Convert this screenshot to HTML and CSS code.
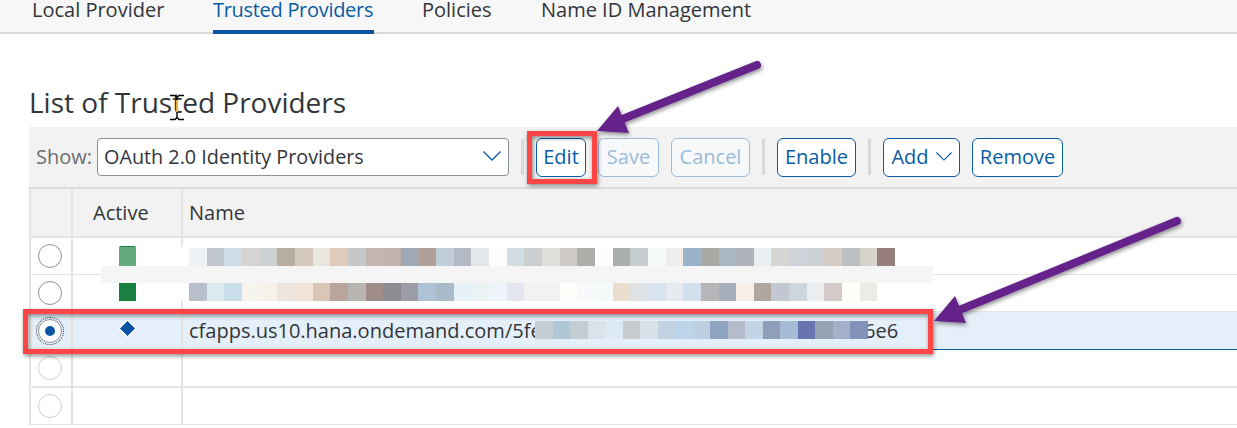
FILE: index.html
```html
<!DOCTYPE html>
<html lang="en">
<head>
<meta charset="utf-8">
<title>List of Trusted Providers</title>
<link rel="stylesheet" href="styles.css">
</head>
<body>
<nav class="tabs">
  <a class="tab tab-local">Local Provider</a>
  <a class="tab tab-active">Trusted Providers</a>
  <a class="tab tab-policies">Policies</a>
  <a class="tab tab-nameid">Name ID Management</a>
</nav>
<main class="content">
  <h1 class="title">List of Trusted Providers</h1>
  <div class="toolbar">
    <span class="show-label">Show:</span>
    <div class="select">
      <span>OAuth 2.0 Identity Providers</span>
      <svg class="chevron chevron-lg" viewBox="0 0 18 10"><path d="M0.5 0.5 L9 9 L17.5 0.5"/></svg>
    </div>
    <span class="sep"></span>
    <button class="btn btn-edit">Edit</button>
    <button class="btn btn-save" disabled>Save</button>
    <button class="btn btn-cancel" disabled>Cancel</button>
    <span class="sep"></span>
    <button class="btn btn-enable">Enable</button>
    <span class="sep"></span>
    <button class="btn btn-add">Add<svg class="chevron" viewBox="0 0 18 10"><path d="M0.5 0.5 L9 9 L17.5 0.5"/></svg></button>
    <button class="btn btn-remove">Remove</button>
  </div>
  <div class="table">
    <div class="row row-head">
      <div class="cell"></div>
      <div class="cell cell-active">Active</div>
      <div class="cell cell-name">Name</div>
    </div>
    <div class="row row-thin">
      <div class="cell cell-radio"><span class="radio"></span></div>
      <div class="cell cell-status"><span class="status status-faded"></span></div>
      <div class="cell cell-name"></div>
    </div>
    <div class="row row-thin">
      <div class="cell cell-radio"><span class="radio"></span></div>
      <div class="cell cell-status"><span class="status status-solid"></span></div>
      <div class="cell cell-name"></div>
    </div>
    <div class="row row-selected">
      <div class="cell cell-radio"><span class="radio radio-on"></span></div>
      <div class="cell cell-diamond"><span class="diamond"></span></div>
      <div class="cell cell-name"><span class="name-start">cfapps.us10.hana.ondemand.com/5fe</span><span class="name-end">6e6</span></div>
    </div>
    <div class="row row-empty">
      <div class="cell cell-radio"><span class="radio radio-off"></span></div>
      <div class="cell"></div>
      <div class="cell"></div>
    </div>
    <div class="row row-empty row-thin">
      <div class="cell cell-radio"><span class="radio radio-off"></span></div>
      <div class="cell"></div>
      <div class="cell"></div>
    </div>
  </div>
</main>
<svg class="annotations" viewBox="0 0 1237 428" width="1237" height="428" aria-hidden="true">
  <defs>
    <filter id="shadow" x="-10%" y="-30%" width="120%" height="170%">
      <feDropShadow dx="1" dy="2" stdDeviation="2" flood-color="#000" flood-opacity="0.45"/>
    </filter>
  </defs>
  <rect x="181" y="247" width="8" height="19" fill="#fff"/>
  <rect x="181" y="283" width="8" height="18" fill="#fff"/>
  <rect x="101" y="266" width="832" height="17" fill="#f5f5f5"/>
  <svg x="189" y="248" width="706" height="18" viewBox="0 0 40 1" preserveAspectRatio="none" shape-rendering="crispEdges">
    <rect x="0" width="1.02" height="1" fill="#eff2f4"/><rect x="1" width="1.02" height="1" fill="#bfc6ce"/><rect x="2" width="1.02" height="1" fill="#cddce5"/><rect x="3" width="1.02" height="1" fill="#d5d4d2"/><rect x="4" width="1.02" height="1" fill="#cdd1d2"/><rect x="5" width="1.02" height="1" fill="#b8ae9f"/><rect x="6" width="1.02" height="1" fill="#d4c7bb"/><rect x="7" width="1.02" height="1" fill="#e8e6de"/><rect x="8" width="1.02" height="1" fill="#dfcbbb"/><rect x="9" width="1.02" height="1" fill="#c6c7c9"/>
    <rect x="10" width="1.02" height="1" fill="#c4b7b1"/><rect x="11" width="1.02" height="1" fill="#c1b3ae"/><rect x="12" width="1.02" height="1" fill="#9fa8b5"/><rect x="13" width="1.02" height="1" fill="#b0a09b"/><rect x="14" width="1.02" height="1" fill="#c2cfd7"/><rect x="15" width="1.02" height="1" fill="#b3bac5"/><rect x="16" width="1.02" height="1" fill="#e3e7ea"/><rect x="17" width="1.02" height="1" fill="#fbfcfb"/><rect x="18" width="1.02" height="1" fill="#d2dde1"/><rect x="19" width="1.02" height="1" fill="#cccfcf"/>
    <rect x="20" width="1.02" height="1" fill="#e0dfdb"/><rect x="21" width="1.02" height="1" fill="#cdc9c4"/><rect x="22" width="1.02" height="1" fill="#b0aeaa"/><rect x="23" width="1.02" height="1" fill="#fcfcfa"/><rect x="24" width="1.02" height="1" fill="#abafae"/><rect x="25" width="1.02" height="1" fill="#c6ced1"/><rect x="26" width="1.02" height="1" fill="#f5f9fa"/><rect x="27" width="1.02" height="1" fill="#eeedeb"/><rect x="28" width="1.02" height="1" fill="#9ab3c8"/><rect x="29" width="1.02" height="1" fill="#a9a8a5"/>
    <rect x="30" width="1.02" height="1" fill="#abb7c3"/><rect x="31" width="1.02" height="1" fill="#b0b3bc"/><rect x="32" width="1.02" height="1" fill="#e9eef0"/><rect x="33" width="1.02" height="1" fill="#d5d5d3"/><rect x="34" width="1.02" height="1" fill="#ced3da"/><rect x="35" width="1.02" height="1" fill="#ccd1d6"/><rect x="36" width="1.02" height="1" fill="#d5ccc3"/><rect x="37" width="1.02" height="1" fill="#bdc0c1"/><rect x="38" width="1.02" height="1" fill="#d6d2cc"/><rect x="39" width="1" height="1" fill="#987f7e"/>
  </svg>
  <svg x="189" y="283" width="706" height="18" viewBox="0 0 40 1" preserveAspectRatio="none" shape-rendering="crispEdges">
    <rect x="0" width="1.02" height="1" fill="#b8bfca"/><rect x="1" width="1.02" height="1" fill="#deeaf2"/><rect x="2" width="1.02" height="1" fill="#cbe0ec"/><rect x="3" width="1.02" height="1" fill="#f7f4ef"/><rect x="4" width="1.02" height="1" fill="#f6f2e9"/><rect x="5" width="1.02" height="1" fill="#eee5e0"/><rect x="6" width="1.02" height="1" fill="#f0e4d6"/><rect x="7" width="1.02" height="1" fill="#dac6b6"/><rect x="8" width="1.02" height="1" fill="#b8a59e"/><rect x="9" width="1.02" height="1" fill="#b8b4b1"/>
    <rect x="10" width="1.02" height="1" fill="#a08d89"/><rect x="11" width="1.02" height="1" fill="#8d8a92"/><rect x="12" width="1.02" height="1" fill="#9a9ca7"/><rect x="13" width="1.02" height="1" fill="#afc3d6"/><rect x="14" width="1.02" height="1" fill="#a9bac9"/><rect x="15" width="1.02" height="1" fill="#e6f1f8"/><rect x="16" width="1.02" height="1" fill="#ebf2f4"/><rect x="17" width="1.02" height="1" fill="#eff4fa"/><rect x="18" width="1.02" height="1" fill="#e3e6ee"/><rect x="19" width="1.02" height="1" fill="#f2f2f0"/>
    <rect x="20" width="1.02" height="1" fill="#f3f2f0"/><rect x="21" width="1.02" height="1" fill="#fefefa"/><rect x="22" width="1.02" height="1" fill="#f7f9fa"/><rect x="23" width="1.02" height="1" fill="#f4f9f9"/><rect x="24" width="1.02" height="1" fill="#eadfcf"/><rect x="25" width="1.02" height="1" fill="#e0e3e6"/><rect x="26" width="1.02" height="1" fill="#d7e3ee"/><rect x="27" width="1.02" height="1" fill="#e6ebf1"/><rect x="28" width="1.02" height="1" fill="#d2e0ed"/><rect x="29" width="1.02" height="1" fill="#b6b6ba"/>
    <rect x="30" width="1.02" height="1" fill="#a6afbc"/><rect x="31" width="1.02" height="1" fill="#f8f0e8"/><rect x="32" width="1.02" height="1" fill="#b0a6a0"/><rect x="33" width="1.02" height="1" fill="#c3c7d2"/><rect x="34" width="1.02" height="1" fill="#cdd6dc"/><rect x="35" width="1.02" height="1" fill="#ebeef0"/><rect x="36" width="1.02" height="1" fill="#d4cbc8"/><rect x="37" width="1.02" height="1" fill="#fefefa"/><rect x="38" width="1.02" height="1" fill="#ecece7"/><rect x="39" width="1" height="1" fill="#ffffff"/>
  </svg>
  <svg x="535" y="321" width="333" height="18" viewBox="0 0 19 1" preserveAspectRatio="none" shape-rendering="crispEdges">
    <rect x="0" width="1.02" height="1" fill="#c5ced5"/><rect x="1" width="1.02" height="1" fill="#b0c7d5"/><rect x="2" width="1.02" height="1" fill="#c5cdd4"/><rect x="3" width="1.02" height="1" fill="#d8e3ec"/><rect x="4" width="1.02" height="1" fill="#deeaf3"/><rect x="5" width="1.02" height="1" fill="#c7cacf"/><rect x="6" width="1.02" height="1" fill="#d7e2eb"/><rect x="7" width="1.02" height="1" fill="#c1d2e3"/><rect x="8" width="1.02" height="1" fill="#bdd5ea"/><rect x="9" width="1.02" height="1" fill="#bcd0e2"/>
    <rect x="10" width="1.02" height="1" fill="#8ea4c1"/><rect x="11" width="1.02" height="1" fill="#b4bccb"/><rect x="12" width="1.02" height="1" fill="#c2d4e6"/><rect x="13" width="1.02" height="1" fill="#8f9fb9"/><rect x="14" width="1.02" height="1" fill="#a6bcd6"/><rect x="15" width="1.02" height="1" fill="#6774b0"/><rect x="16" width="1.02" height="1" fill="#94a3b3"/><rect x="17" width="1.02" height="1" fill="#a3b1ca"/><rect x="18" width="1" height="1" fill="#8292b9"/>
  </svg>
  <g class="cursor">
    <path d="M170 95.5h5l2 2 2-2h5M177 97v22M170 119.5h5l2-2 2 2h5" fill="none" stroke="#000" stroke-width="1.4"/>
    <path d="M176 100h2v12h-2z" fill="#e2b23c"/>
  </g>
  <g filter="url(#shadow)">
    <rect x="529.5" y="133.5" width="65" height="48" fill="none" stroke="#fe4444" stroke-width="5"/>
    <rect x="25.5" y="311.5" width="905" height="40" fill="none" stroke="#fe4444" stroke-width="5"/>
    <path d="M757 65 L615 122" fill="none" stroke="#65248a" stroke-width="8" stroke-linecap="round"/>
    <path d="M597 131 L618 106 L629 133 Z" fill="#65248a"/>
    <path d="M1177 221 L952 313" fill="none" stroke="#65248a" stroke-width="8" stroke-linecap="round"/>
    <path d="M934 321 L955 296 L966 323 Z" fill="#65248a"/>
  </g>
</svg>
</body>
</html>
```
FILE: styles.css
```css
* { box-sizing: border-box; }
html, body { margin: 0; padding: 0; }
body {
  position: relative;
  width: 1237px;
  height: 428px;
  overflow: hidden;
  background: #fff;
  color: #32363a;
  font-family: "Open Sans", "Noto Sans", sans-serif;
}
.tabs {
  display: flex;
  gap: 48px;
  height: 34px;
  padding-left: 32px;
  background: #f7f7f7;
  border-bottom: 2px solid #d9d9d9;
}
.tab {
  flex: none;
  height: 34px;
  font-size: 20px;
  line-height: 19px;
  white-space: nowrap;
  color: #32363a;
}
.tab-local { width: 133px; }
.tab-active {
  width: 161px;
  letter-spacing: -0.3px;
  color: #0a5ba5;
  border-bottom: 4px solid #0a55a3;
}
.tab-policies { width: 71px; }
.tab-nameid { width: 208px; }
.content { padding-left: 29px; }
.title {
  margin: 0;
  height: 93px;
  padding: 49px 0 0;
  font-size: 28px;
  line-height: 38px;
  font-weight: 400;
  color: #32363a;
}
.toolbar {
  display: flex;
  align-items: flex-start;
  height: 62px;
  padding: 11px 0 0 7px;
  background: #f2f2f2;
  border-bottom: 2px solid #dcdcdc;
}
.show-label {
  width: 61px;
  font-size: 20px;
  line-height: 38px;
  color: #6a6d70;
}
.select {
  display: flex;
  align-items: center;
  justify-content: space-between;
  width: 412px;
  height: 38px;
  padding: 0 7px 2px 6px;
  background: #fff;
  border: 1px solid #89919a;
  border-radius: 4px;
  font-size: 19.8px;
}
.chevron {
  width: 16px;
  height: 9px;
  margin-left: 7px;
  fill: none;
  stroke: #0a5ba5;
  stroke-width: 1.3;
}
.chevron-lg { width: 18px; height: 10px; }
.sep {
  flex: none;
  width: 3px;
  height: 36px;
  margin: 1px 12px;
  background: #d9d9d9;
}
.btn {
  flex: none;
  display: flex;
  align-items: center;
  justify-content: center;
  height: 39px;
  padding: 0 0 2px;
  margin-right: 12px;
  background: #fff;
  border: 1px solid #0a5ba5;
  border-radius: 6px;
  color: #0a5ba5;
  font: inherit;
  font-size: 20px;
}
.btn:disabled {
  background: #f6f8fa;
  border-color: #9dbbd8;
  color: #9dbbd8;
}
.btn-edit { width: 50px; }
.btn-save { width: 61px; }
.btn-cancel { width: 79px; margin-right: 0; }
.btn-enable { width: 79px; margin-right: 0; }
.btn-add { width: 77px; }
.btn-remove { width: 91px; }
.table { border-left: 2px solid #e4e4e4; }
.row {
  display: grid;
  grid-template-columns: 42px 110px 1fr;
  height: 38px;
  border-bottom: 2px solid #e4e4e4;
}
.row-thin { height: 37px; border-bottom-width: 1px; }
.row-head { height: 49px; background: #f2f2f2; }
.row-selected {
  background: #e5eff9;
  border-bottom: 1px solid #0a5ba5;
}
.cell {
  display: flex;
  align-items: center;
  font-size: 20px;
  border-right: 2px solid #e4e4e4;
}
.cell:last-child { border-right: 0; }
.cell-active { padding-left: 20px; }
.cell-name { padding-left: 6px; }
.cell-radio { justify-content: center; padding-right: 2px; }
.cell-status { justify-content: center; align-items: flex-start; padding-top: 8px; }
.cell-diamond { justify-content: center; align-items: flex-start; padding-top: 11px; }
.radio {
  width: 24px;
  height: 24px;
  border: 1px solid #89919a;
  border-radius: 50%;
  background: #fff;
}
.radio-off { border-color: #d0d0d0; }
.radio-on {
  display: flex;
  align-items: center;
  justify-content: center;
  outline: 1px dotted #32363a;
  outline-offset: 1px;
}
.radio-on::before {
  content: "";
  width: 10px;
  height: 10px;
  border-radius: 50%;
  background: #0a55a3;
}
.status { width: 17px; }
.status-faded {
  height: 20px;
  background: #61ab7e;
  border-top: 1px solid #188043;
  border-radius: 2px 2px 0 0;
}
.status-solid { height: 18px; background: #188043; }
.diamond {
  width: 11px;
  height: 11px;
  background: #0a55a3;
  outline: 1px solid #fff;
  transform: rotate(45deg);
}
.name-start { flex: none; width: 346px; overflow: hidden; white-space: nowrap; }
.name-end { margin-left: 329px; }
.annotations {
  position: absolute;
  left: 0;
  top: 0;
  pointer-events: none;
}
```
